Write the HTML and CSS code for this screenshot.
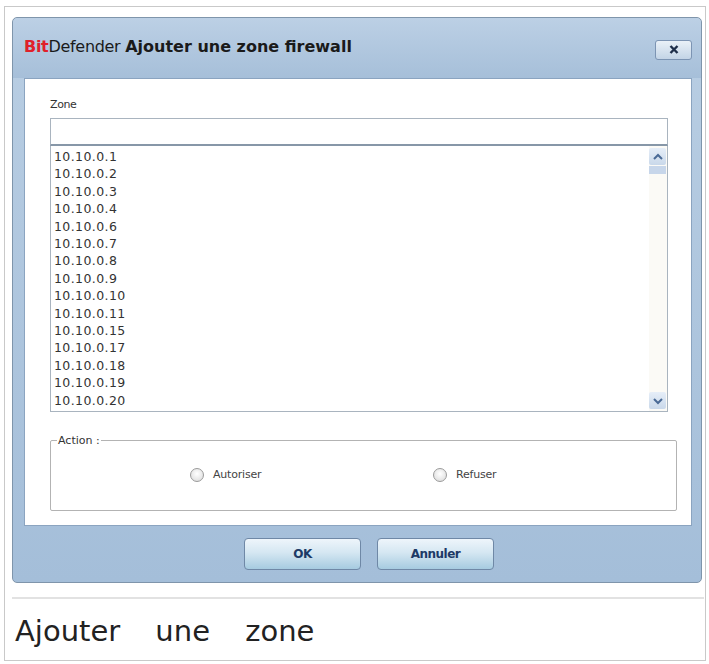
FILE: index.html
```html
<!DOCTYPE html>
<html lang="fr">
<head>
    <meta charset="UTF-8">
    <title>Ajouter une zone</title>
    <link rel="stylesheet" href="styles.css">
</head>
<body>
<div class="figure">
    <!-- Dialog window -->
    <div class="dialog">
        <div class="titlebar">
            <span class="title"><span class="brand-red">Bit</span>Defender <b>Ajouter une zone firewall</b></span>
            <div class="close-btn">
                <svg width="10" height="9" viewBox="0 0 10 9"><path d="M1.5 1 L8.5 8 M8.5 1 L1.5 8" stroke="#1f2f4a" stroke-width="2.4"/></svg>
            </div>
        </div>

        <div class="panel">
            <div class="field-label">Zone</div>
            <div class="zone-input"></div>
            <div class="zone-list">
                <ul class="ip-list">
                    <li>10.10.0.1</li>
                    <li>10.10.0.2</li>
                    <li>10.10.0.3</li>
                    <li>10.10.0.4</li>
                    <li>10.10.0.6</li>
                    <li>10.10.0.7</li>
                    <li>10.10.0.8</li>
                    <li>10.10.0.9</li>
                    <li>10.10.0.10</li>
                    <li>10.10.0.11</li>
                    <li>10.10.0.15</li>
                    <li>10.10.0.17</li>
                    <li>10.10.0.18</li>
                    <li>10.10.0.19</li>
                    <li>10.10.0.20</li>
                </ul>
                <div class="scrollbar">
                    <div class="arrow">
                        <svg width="10" height="8" viewBox="0 0 10 8"><path d="M1 6 L5 2 L9 6" fill="none" stroke="#4a6a96" stroke-width="2"/></svg>
                    </div>
                    <div class="thumb"></div>
                    <div class="track"></div>
                    <div class="arrow">
                        <svg width="10" height="8" viewBox="0 0 10 8"><path d="M1 2 L5 6 L9 2" fill="none" stroke="#4a6a96" stroke-width="2"/></svg>
                    </div>
                </div>
            </div>

            <fieldset class="action-box">
                <legend>Action :</legend>
                <label class="radio"><span class="dot"></span>Autoriser</label>
                <label class="radio"><span class="dot"></span>Refuser</label>
            </fieldset>
        </div>

        <div class="footer">
            <div class="btn">OK</div>
            <div class="btn">Annuler</div>
        </div>
    </div>

    <div class="separator"></div>
    <div class="caption">Ajouter une zone</div>
</div>
</body>
</html>
```

FILE: styles.css
```css
* {
    box-sizing: border-box;
    margin: 0;
    padding: 0;
}

body {
    background-color: #fff;
    font-family: 'DejaVu Sans', sans-serif;
    color: #333;
}

.figure {
    margin: 6px 3px 0 4px;
    width: 702px;
    height: 655px;
    border: 1px solid #c9c9c9;
    background-color: #fff;
}

/* Dialog window */
.dialog {
    margin: 10px 3px 0 7px;
    height: 566px;
    border: 1px solid #7f95ab;
    border-radius: 5px;
    background: linear-gradient(#b9cee3, #a4bed9);
    display: flex;
    flex-direction: column;
}

.titlebar {
    height: 60px;
    display: flex;
    align-items: center;
    justify-content: space-between;
    padding: 0 9px 0 11px;
    background: linear-gradient(#bcd0e5, #a6bfd9);
    border-radius: 5px 5px 0 0;
}

.title {
    font-size: 16px;
    color: #1a1a1a;
    letter-spacing: -0.3px;
    margin-top: -3px;
}

.title b {
    letter-spacing: 0;
}

.brand-red {
    color: #e0202a;
    font-weight: bold;
}

.close-btn {
    width: 37px;
    height: 20px;
    border: 1px solid #7c94b3;
    border-radius: 3px;
    background: linear-gradient(#eaf1f8, #c3d4e6);
    display: flex;
    align-items: center;
    justify-content: center;
    margin-top: 3px;
}

/* White content area */
.panel {
    height: 448px;
    margin: 0 9px 0 11px;
    background-color: #fff;
    border: 1px solid #8ba4c0;
    padding: 19px 23px 0 25px;
}

.field-label {
    font-size: 11px;
    color: #333;
    letter-spacing: -0.4px;
    height: 20px;
}

.zone-input {
    height: 28px;
    border: 1px solid #a9b4bf;
    border-bottom: 2px solid #8797a8;
    background-color: #fff;
}

.zone-list {
    height: 266px;
    border: 1px solid #a9b4bf;
    border-top: none;
    display: flex;
}

.ip-list {
    list-style: none;
    flex: 1;
    padding: 2px 0 0 3px;
}

.ip-list li {
    font-size: 12.5px;
    line-height: 17.4px;
    color: #333;
    letter-spacing: 0.4px;
}

.scrollbar {
    width: 18px;
    display: flex;
    flex-direction: column;
    padding: 2px 1px 2px 0;
    background-color: #fbfaf6;
}

.scrollbar .arrow {
    height: 17px;
    background: linear-gradient(#e6eef8, #c9d8ea);
    border-radius: 2px;
    display: flex;
    align-items: center;
    justify-content: center;
}

.scrollbar .thumb {
    height: 8px;
    margin-top: 1px;
    background-color: #c7d6ea;
}

.scrollbar .track {
    flex: 1;
}

/* Action group */
.action-box {
    margin-top: 22px;
    height: 77px;
    border: 1px solid #b3b3b3;
    border-radius: 2px;
    padding: 0 0 0 139px;
    display: flex;
    align-items: center;
}

.action-box legend {
    font-size: 11px;
    color: #333;
    margin-left: -133px;
    padding: 0 1px;
}

.radio {
    display: flex;
    align-items: center;
    font-size: 11px;
    color: #444;
    letter-spacing: -0.2px;
    width: 243px;
    margin-top: -8px;
}

.dot {
    width: 14px;
    height: 14px;
    border-radius: 50%;
    border: 1px solid #9a9a9a;
    background: radial-gradient(circle at 50% 40%, #fff, #d8d8d8);
    margin-right: 9px;
}

/* Buttons */
.footer {
    flex: 1;
    display: flex;
    justify-content: center;
    align-items: center;
    gap: 16px;
    padding: 0 0 0 24px;
}

.btn {
    width: 117px;
    height: 32px;
    border: 1px solid #6f88a6;
    border-radius: 4px;
    background: linear-gradient(#eef5fb 0%, #d5e7f2 45%, #a6cbe0 100%);
    color: #1d3a66;
    font-size: 12px;
    font-weight: bold;
    letter-spacing: -0.5px;
    display: flex;
    align-items: center;
    justify-content: center;
}

.separator {
    margin: 14px 1px 0 7px;
    height: 2px;
    background-color: #e2e2e2;
}

.caption {
    font-family: 'DejaVu Sans', sans-serif;
    font-size: 29px;
    color: #222;
    word-spacing: 26px;
    padding: 15px 0 0 10px;
}
```
